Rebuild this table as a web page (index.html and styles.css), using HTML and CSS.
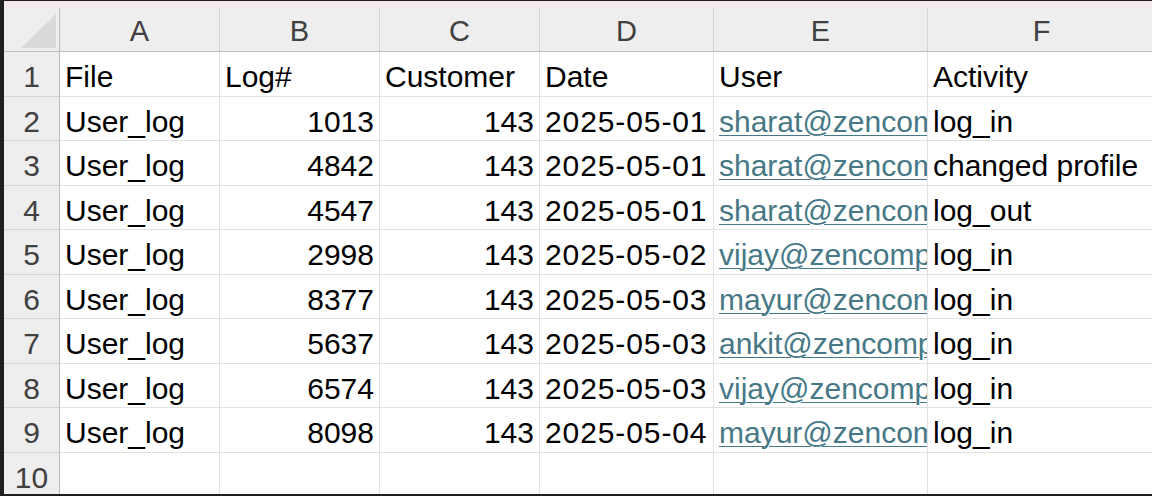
FILE: index.html
```html
<!DOCTYPE html>
<html>
<head>
<meta charset="utf-8">
<link rel="stylesheet" href="styles.css">
</head>
<body>
<div class="frame">
  <div class="strip"></div>
  <div class="sheet">
    <div class="corner"><div class="tri"></div></div>
    <div class="colh">A</div><div class="colh">B</div><div class="colh">C</div><div class="colh">D</div><div class="colh">E</div><div class="colh">F</div>

    <div class="rowh">1</div><div class="c">File</div><div class="c">Log#</div><div class="c">Customer</div><div class="c">Date</div><div class="c">User</div><div class="c">Activity</div>
    <div class="rowh">2</div><div class="c">User_log</div><div class="c num">1013</div><div class="c num">143</div><div class="c date">2025-05-01</div><div class="c"><a class="lnk">sharat@zencompany.com</a></div><div class="c">log_in</div>
    <div class="rowh">3</div><div class="c">User_log</div><div class="c num">4842</div><div class="c num">143</div><div class="c date">2025-05-01</div><div class="c"><a class="lnk">sharat@zencompany.com</a></div><div class="c">changed profile</div>
    <div class="rowh">4</div><div class="c">User_log</div><div class="c num">4547</div><div class="c num">143</div><div class="c date">2025-05-01</div><div class="c"><a class="lnk">sharat@zencompany.com</a></div><div class="c">log_out</div>
    <div class="rowh">5</div><div class="c">User_log</div><div class="c num">2998</div><div class="c num">143</div><div class="c date">2025-05-02</div><div class="c"><a class="lnk">vijay@zencompany.com</a></div><div class="c">log_in</div>
    <div class="rowh">6</div><div class="c">User_log</div><div class="c num">8377</div><div class="c num">143</div><div class="c date">2025-05-03</div><div class="c"><a class="lnk">mayur@zencompany.com</a></div><div class="c">log_in</div>
    <div class="rowh">7</div><div class="c">User_log</div><div class="c num">5637</div><div class="c num">143</div><div class="c date">2025-05-03</div><div class="c"><a class="lnk">ankit@zencompany.com</a></div><div class="c">log_in</div>
    <div class="rowh">8</div><div class="c">User_log</div><div class="c num">6574</div><div class="c num">143</div><div class="c date">2025-05-03</div><div class="c"><a class="lnk">vijay@zencompany.com</a></div><div class="c">log_in</div>
    <div class="rowh">9</div><div class="c">User_log</div><div class="c num">8098</div><div class="c num">143</div><div class="c date">2025-05-04</div><div class="c"><a class="lnk">mayur@zencompany.com</a></div><div class="c">log_in</div>
    <div class="rowh">10</div><div class="c"></div><div class="c"></div><div class="c"></div><div class="c"></div><div class="c"></div><div class="c"></div>
  </div>
</div>
</body>
</html>
```

FILE: styles.css
```css
* { box-sizing: border-box; }
html, body { margin: 0; padding: 0; }
body {
  width: 1152px;
  height: 496px;
  overflow: hidden;
  background: #1f1f1f;
  font-family: "Liberation Sans", Arial, sans-serif;
}
.frame {
  height: 496px;
  padding: 1px 0 2px 4px;
  display: flex;
  flex-direction: column;
}
.strip {
  height: 7px;
  flex: none;
  background: #f4e9ed;
}
.sheet {
  flex: 1;
  overflow: hidden;
  background: #ffffff;
  display: grid;
  grid-template-columns: 56px 160px 160px 160px 174px 214px 228px;
  grid-template-rows: 44px repeat(10, 44.5px);
}
.corner {
  background: #eeeeee;
  border-right: 1px solid #bcbcbc;
  border-bottom: 1px solid #bcbcbc;
  display: flex;
  justify-content: flex-end;
  align-items: flex-end;
  padding: 0 3px 3px 0;
}
.tri {
  width: 35px;
  height: 34px;
  background: #d9d9d9;
  clip-path: polygon(100% 0, 100% 100%, 0 100%);
}
.colh {
  background: #eeeeee;
  border-right: 1px solid #d5d5d5;
  border-bottom: 1px solid #bcbcbc;
  color: #404040;
  font-size: 29px;
  text-align: center;
  line-height: 37px;
  padding-top: 5px;
}
.rowh {
  background: #eeeeee;
  border-right: 1px solid #bcbcbc;
  border-bottom: 1px solid #d5d5d5;
  color: #404040;
  font-size: 30px;
  text-align: center;
  line-height: 38px;
  padding-top: 6px;
}
.c {
  border-right: 1px solid #e1e1e1;
  border-bottom: 1px solid #e1e1e1;
  color: #000000;
  font-size: 30px;
  line-height: 38px;
  padding: 6px 5px 0 5px;
  white-space: nowrap;
  overflow: hidden;
}
.num { text-align: right; }
.date { letter-spacing: 0.9px; }
.lnk {
  color: #467886;
  text-decoration: underline;
  text-decoration-thickness: 1px;
  text-underline-offset: 3px;
}
```
